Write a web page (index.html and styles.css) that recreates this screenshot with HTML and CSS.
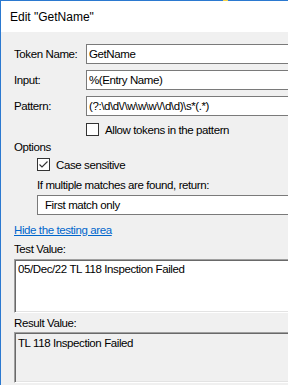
FILE: index.html
```html
<!DOCTYPE html>
<html lang="en">
<head>
  <meta charset="UTF-8">
  <title>Edit "GetName"</title>
  <link rel="stylesheet" href="styles.css">
</head>
<body>

  <div class="window">
    <span class="behind"></span>
    <div class="titlebar">Edit "GetName"</div>

    <div class="client">
      <div class="fields">
        <label>Token Name:</label>
        <div class="textbox">GetName</div>
        <label>Input:</label>
        <div class="textbox">%(Entry Name)</div>
        <label>Pattern:</label>
        <div class="textbox">(?:\d\d\/\w\w\w\/\d\d)\s*(.*)</div>
      </div>

      <div class="check allow">
        <svg class="box" width="13" height="13" viewBox="0 0 13 13">
          <rect x="0.5" y="0.5" width="12" height="12" fill="#fff" stroke="#333"/>
        </svg>
        <span>Allow tokens in the pattern</span>
      </div>

      <div class="group-title">Options</div>

      <div class="check case">
        <svg class="box" width="13" height="13" viewBox="0 0 13 13">
          <rect x="0.5" y="0.5" width="12" height="12" fill="#fff" stroke="#333"/>
          <path d="M2.5 6.5 L5 9 L10.5 3.5" fill="none" stroke="#333" stroke-width="1.1"/>
        </svg>
        <span>Case sensitive</span>
      </div>

      <div class="multi-label">If multiple matches are found, return:</div>
      <div class="combo">First match only</div>

      <a class="link" href="#">Hide the testing area</a>

      <div class="caption test-caption">Test Value:</div>
      <div class="sunken test-box">05/Dec/22 TL 118 Inspection Failed</div>

      <div class="caption result-caption">Result Value:</div>
      <div class="sunken result-box">TL 118 Inspection Failed</div>
    </div>
  </div>

</body>
</html>
```

FILE: styles.css
```css
body {
  margin: 0;
  overflow: hidden;
  font-family: "Liberation Sans", Arial, sans-serif;
  font-size: 11.5px;
  letter-spacing: -0.4px;
  color: #000;
  background-color: #f0f0f0;
}

.window {
  position: relative;
  width: 380px;
  height: 385px;
  border-top: 1px solid #2b79d0;
  border-left: 1px solid #2b79d0;
  background-color: #f0f0f0;
}

/* bit of another window peeking above the frame */
.behind {
  position: absolute;
  top: -1px;
  left: 222px;
  width: 5px;
  height: 1px;
  background-color: #f2d24a;
}

.titlebar {
  height: 31px;
  display: flex;
  align-items: center;
  padding-left: 9px;
  background-color: #fff;
  font-size: 12px;
  letter-spacing: 0;
}

.client {
  display: flex;
  flex-direction: column;
  align-items: flex-start;
  padding: 12px 0 0 13px;
}

.fields {
  display: grid;
  grid-template-columns: 72px 1fr;
  grid-auto-rows: 20px;
  row-gap: 6px;
  width: 100%;
  align-items: center;
}

.textbox,
.combo {
  box-sizing: border-box;
  height: 20px;
  display: flex;
  align-items: center;
  padding-left: 2px;
  border: 1px solid #7a7a7a;
  background-color: #fff;
}

.check {
  display: flex;
  align-items: center;
  gap: 6px;
  height: 13px;
}

.check .box {
  display: block;
  flex: none;
}

.allow {
  margin: 7px 0 0 72px;
}

.group-title {
  margin-top: 5px;
  line-height: 13px;
}

.case {
  margin: 4px 0 0 23px;
}

.multi-label {
  margin: 8px 0 0 23px;
  line-height: 13px;
}

.combo {
  margin: 3px 0 0 23px;
  width: 330px;
  padding-left: 7px;
}

.link {
  margin-top: 9px;
  line-height: 13px;
  color: #0066cc;
}

.caption {
  line-height: 13px;
}

.test-caption {
  margin-top: 6px;
}

.result-caption {
  margin-top: 4px;
}

.sunken {
  box-sizing: border-box;
  width: 360px;
  padding: 3px 0 0 3px;
  border-top: 1px solid #a0a0a0;
  border-left: 1px solid #a0a0a0;
  border-bottom: 1px solid #fff;
  border-right: 1px solid #fff;
  box-shadow: inset 1px 1px 0 #696969, inset -1px -1px 0 #e3e3e3;
}

.test-box {
  margin-top: 3px;
  height: 54px;
  background-color: #fff;
}

.result-box {
  margin-top: 2px;
  height: 51px;
  padding-top: 4px;
  background-color: #f0f0f0;
}
```
